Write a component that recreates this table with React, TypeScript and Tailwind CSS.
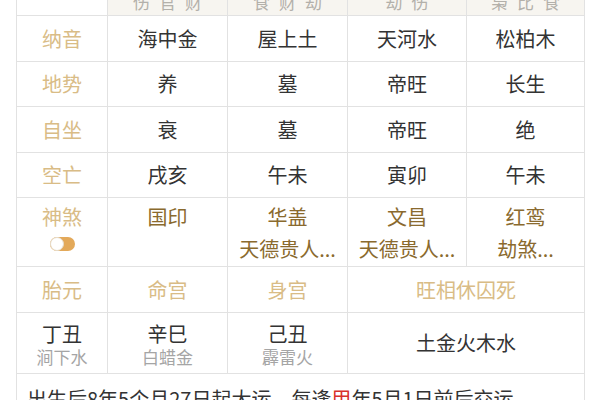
import React from 'react';

const GOLD = 'text-[#d9bc86]';
const DEEP = 'text-[#8a6a2e]';

const HEAD = [['伤', '官', '财'], ['食', '财', '劫'], ['劫', '伤'], ['枭', '比', '食']];

const ROWS: { label: string; cells: string[] }[] = [
  { label: '纳音', cells: ['海中金', '屋上土', '天河水', '松柏木'] },
  { label: '地势', cells: ['养', '墓', '帝旺', '长生'] },
  { label: '自坐', cells: ['衰', '墓', '帝旺', '绝'] },
  { label: '空亡', cells: ['戌亥', '午未', '寅卯', '午未'] },
];

const SHENSHA = [['国印'], ['华盖', '天德贵人...'], ['文昌', '天德贵人...'], ['红鸾', '劫煞...']];

const Toggle: React.FC = () => (
  <div className="mx-auto mt-[8px] h-[14px] w-[25px] rounded-full bg-[#e3a95a] relative">
    <div className="absolute left-0 top-0 h-[14px] w-[14px] rounded-full bg-white border border-[#e6dccb]" />
  </div>
);

export default function App() {
  const cell = 'border border-[#e2e2e2] text-center align-middle p-0';
  return (
    <div className="w-[600px] h-[400px] overflow-hidden bg-white" style={{ fontFamily: '"Noto Sans CJK SC", "Noto Sans", sans-serif' }}>
      <table className="ml-[16px] mt-[-31px] border-collapse table-fixed w-[568px] text-[20px] text-[#333]">
        <colgroup>
          <col className="w-[91px]" />
          <col className="w-[120px]" />
          <col className="w-[120px]" />
          <col className="w-[119px]" />
          <col className="w-[118px]" />
        </colgroup>
        <tbody>
          <tr className="h-[46px]">
            <td className={`${cell} bg-white`} />
            {HEAD.map((h, i) => (
              <td key={i} className="border border-[#e2e2e2] bg-[#f7f5f0] align-bottom p-0 pb-[3px]">
                <div className="flex justify-center gap-[9px] text-[17px] leading-[20px] text-[#b3b0aa]">
                  {h.map((c, j) => <span key={j}>{c}</span>)}
                </div>
              </td>
            ))}
          </tr>
          {ROWS.map((r, i) => (
            <tr key={r.label} className={i % 2 === 0 ? 'h-[46px]' : 'h-[45px]'}>
              <td className={`${cell} ${GOLD}`}>{r.label}</td>
              {r.cells.map((c, j) => (
                <td key={j} className={cell}>{c}</td>
              ))}
            </tr>
          ))}
          <tr className="h-[69px]">
            <td className={`${cell} align-top pt-[7px] ${GOLD}`}>
              <div className="leading-[24px]">神煞</div>
              <Toggle />
            </td>
            {SHENSHA.map((s, j) => (
              <td key={j} className={`${cell} align-top pt-[3px] ${DEEP}`}>
                {s.map((t, k) => (
                  <div key={k} className="leading-[32px]">{t}</div>
                ))}
              </td>
            ))}
          </tr>
          <tr className="h-[46px]">
            <td className={`${cell} ${GOLD}`}>胎元</td>
            <td className={`${cell} ${GOLD}`}>命宫</td>
            <td className={`${cell} ${GOLD}`}>身宫</td>
            <td colSpan={2} className={`${cell} ${GOLD}`}>旺相休囚死</td>
          </tr>
          <tr className="h-[61px]">
            {[['丁丑', '涧下水'], ['辛巳', '白蜡金'], ['己丑', '霹雷火']].map(([a, b]) => (
              <td key={a} className={`${cell} pt-[4px]`}>
                <div className="leading-[24px]">{a}</div>
                <div className="leading-[22px] text-[17px] text-[#a5a5a5]">{b}</div>
              </td>
            ))}
            <td colSpan={2} className={cell}>土金火木水</td>
          </tr>
          <tr className="h-[60px]">
            <td colSpan={5} className="border border-[#e2e2e2] text-left align-top pl-[10px] pt-[11px] leading-[28px]">
              出生后8年5个月27日起大运，每逢<span className="text-[#d8322b]">甲</span>年5月1日前后交运
            </td>
          </tr>
        </tbody>
      </table>
    </div>
  );
}
